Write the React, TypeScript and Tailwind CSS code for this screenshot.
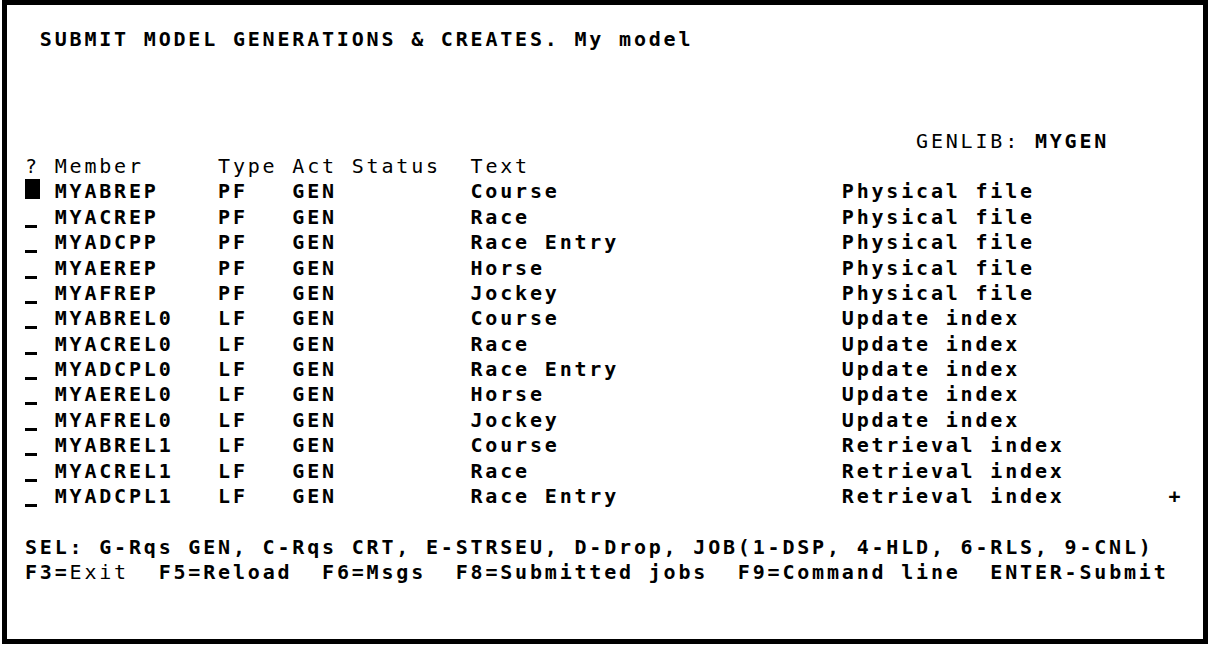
import React from 'react';

type Row = { member: string; type: string; text: string; desc: string };

const rows: Row[] = [
  { member: 'MYABREP', type: 'PF', text: 'Course', desc: 'Physical file' },
  { member: 'MYACREP', type: 'PF', text: 'Race', desc: 'Physical file' },
  { member: 'MYADCPP', type: 'PF', text: 'Race Entry', desc: 'Physical file' },
  { member: 'MYAEREP', type: 'PF', text: 'Horse', desc: 'Physical file' },
  { member: 'MYAFREP', type: 'PF', text: 'Jockey', desc: 'Physical file' },
  { member: 'MYABREL0', type: 'LF', text: 'Course', desc: 'Update index' },
  { member: 'MYACREL0', type: 'LF', text: 'Race', desc: 'Update index' },
  { member: 'MYADCPL0', type: 'LF', text: 'Race Entry', desc: 'Update index' },
  { member: 'MYAEREL0', type: 'LF', text: 'Horse', desc: 'Update index' },
  { member: 'MYAFREL0', type: 'LF', text: 'Jockey', desc: 'Update index' },
  { member: 'MYABREL1', type: 'LF', text: 'Course', desc: 'Retrieval index' },
  { member: 'MYACREL1', type: 'LF', text: 'Race', desc: 'Retrieval index' },
  { member: 'MYADCPL1', type: 'LF', text: 'Race Entry', desc: 'Retrieval index' },
];

const pad = (s: string, n: number) => s + ' '.repeat(Math.max(0, n - s.length));

const Line: React.FC<{ children?: React.ReactNode }> = ({ children }) => (
  <div className="h-[25.4px] leading-[25.4px] whitespace-pre">{children}</div>
);

const App: React.FC = () => {
  return (
    <div className="w-[1209px] h-[647px] bg-white overflow-hidden">
      <div
        className="ml-[2px] w-[1206px] h-[644px] border-[5px] border-black bg-white pt-[22px] pl-[18px] text-black text-[20px] tracking-[2.81px]"
        style={{ fontFamily: '"DejaVu Sans Mono", "Liberation Mono", monospace' }}
      >
        <Line>
          <span className="font-bold"> SUBMIT MODEL GENERATIONS &amp; CREATES. My model</span>
        </Line>
        <Line />
        <Line />
        <Line />
        <Line>
          {' '.repeat(60)}GENLIB: <span className="font-bold">MYGEN</span>
        </Line>
        <Line>{'? Member     Type Act Status  Text'}</Line>
        {rows.map((r, i) => (
          <Line key={r.member}>
            {i === 0 ? (
              <span className="inline-block w-[14.85px] h-[25.4px] align-top">
                <span className="block w-[15px] h-[20px] bg-black" />
              </span>
            ) : (
              <span className="inline-block w-[14.85px] h-[25.4px] align-top pt-[20px]">
                <span className="block w-[12px] h-[3px] bg-black" />
              </span>
            )}
            <span className="font-bold">
              {' ' + pad(r.member, 11) + pad(r.type, 5) + pad('GEN', 4) + ' '.repeat(8) + pad(r.text, 25)}
              {i === rows.length - 1 ? pad(r.desc, 22) + '+' : r.desc}
            </span>
          </Line>
        ))}
        <Line />
        <Line>
          <span className="font-bold">SEL: G-Rqs GEN, C-Rqs CRT, E-STRSEU, D-Drop, JOB(1-DSP, 4-HLD, 6-RLS, 9-CNL)</span>
        </Line>
        <Line>
          <span className="font-bold">F3=</span>Exit
          <span className="font-bold">  F5=Reload  F6=Msgs  F8=Submitted jobs  F9=Command line  ENTER-Submit</span>
        </Line>
      </div>
    </div>
  );
};

export default App;
